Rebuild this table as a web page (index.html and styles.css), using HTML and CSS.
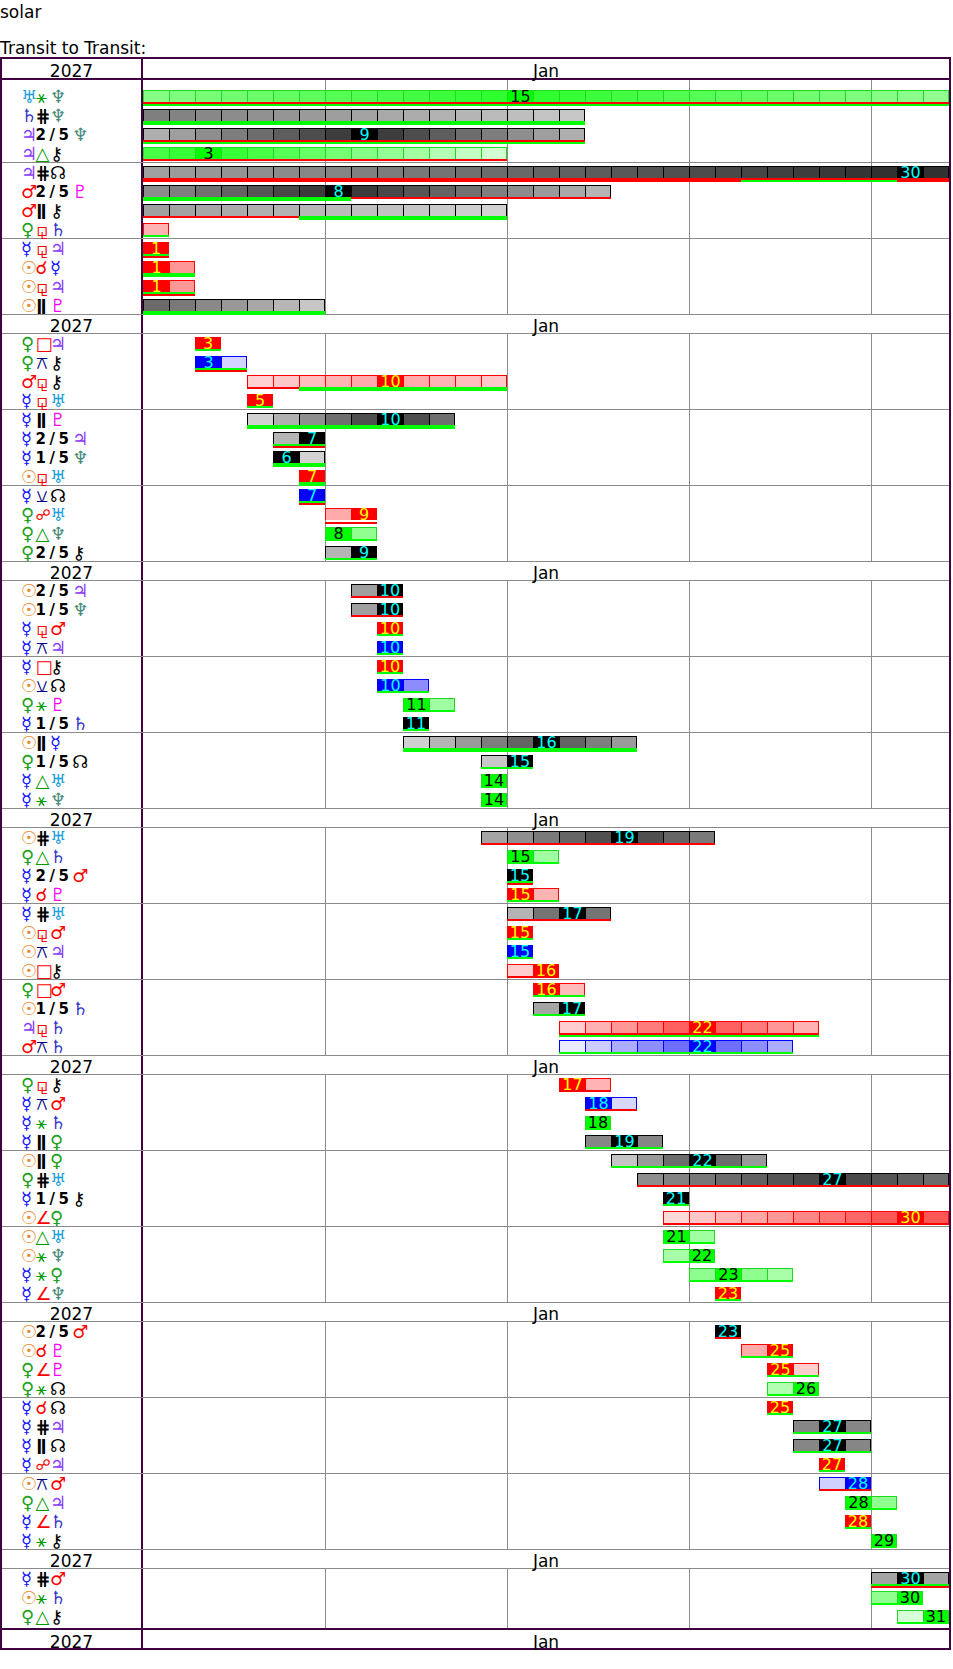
FILE: index.html
```html
<!DOCTYPE html>
<html lang="en">
<head>
<meta charset="utf-8">
<title>solar</title>
<link rel="stylesheet" href="styles.css">
</head>
<body>
<div class="intro">solar<br><br>Transit to Transit:</div>
<div class="chart">
  <div class="hdr top"><div class="yr">2027</div><div class="mon">Jan</div></div>

  <div class="grp first">
    <div class="labels">
      <div class="lbl"><span class="ur">♅</span><span class="grn">⚹</span><span class="ne">♆</span></div>
      <div class="lbl"><span class="sa">♄</span><span class="blk">⋕</span><span class="ne">♆</span></div>
      <div class="lbl"><span class="ju">♃</span><span class="q">2/5</span><span class="ne">♆</span></div>
      <div class="lbl"><span class="ju">♃</span><span class="grn">△</span><span class="ch">⚷</span></div>
    </div>
    <div class="tl">
      <div class="trk"><div class="bar" data-b="1 31 15 28 1 g" data-s="r|g"></div></div>
      <div class="trk"><div class="bar" data-b="1 17 -17 39 1 k" data-s="g|g"></div></div>
      <div class="trk"><div class="bar" data-b="1 17 9 11 1 k" data-s="r|g"></div></div>
      <div class="trk"><div class="bar" data-b="1 14 3 12 1 g" data-s="r"></div></div>
    </div>
  </div>

  <div class="grp">
    <div class="labels">
      <div class="lbl"><span class="ju">♃</span><span class="blk">⋕</span><span class="no">☊</span></div>
      <div class="lbl"><span class="ma">♂</span><span class="q">2/5</span><span class="pl">♇</span></div>
      <div class="lbl"><span class="ma">♂</span><span class="par">ǁ</span><span class="ch">⚷</span></div>
      <div class="lbl"><span class="ve">♀</span><span class="red">⚼</span><span class="sa">♄</span></div>
    </div>
    <div class="tl">
      <div class="trk"><div class="bar" data-b="1 31 30 45 1 k" data-s="r|r1-23,g24-29,r30-31"></div></div>
      <div class="trk"><div class="bar" data-b="1 18 8 13 1 k" data-s="g1-8,r9-18|g1-8"></div></div>
      <div class="trk"><div class="bar" data-b="1 14 -28 45 1 k" data-s="r1-6,g7-14|_1-6,g7-14"></div></div>
      <div class="trk"><div class="bar" data-b="1 1 0 1.5 1 r" data-s="g"></div></div>
    </div>
  </div>

  <div class="grp">
    <div class="labels">
      <div class="lbl"><span class="me">☿</span><span class="red">⚼</span><span class="ju">♃</span></div>
      <div class="lbl"><span class="su">☉</span><span class="red">☌</span><span class="me">☿</span></div>
      <div class="lbl"><span class="su">☉</span><span class="red">⚼</span><span class="ju">♃</span></div>
      <div class="lbl"><span class="su">☉</span><span class="par">ǁ</span><span class="pl">♇</span></div>
    </div>
    <div class="tl">
      <div class="trk"><div class="bar" data-b="1 1 1 1 1 r" data-s="g|r"></div></div>
      <div class="trk"><div class="bar" data-b="1 2 1 2 1 r" data-s="g|g"></div></div>
      <div class="trk"><div class="bar" data-b="1 2 1 2 1 r" data-s="g|r"></div></div>
      <div class="trk"><div class="bar" data-b="1 7 -3 11.6 1 k" data-s="g|g"></div></div>
    </div>
  </div>

  <div class="hdr"><div class="yr">2027</div><div class="mon">Jan</div></div>

  <div class="grp">
    <div class="labels">
      <div class="lbl"><span class="ve">♀</span><span class="red">□</span><span class="ju">♃</span></div>
      <div class="lbl"><span class="ve">♀</span><span class="nav">⚻</span><span class="ch">⚷</span></div>
      <div class="lbl"><span class="ma">♂</span><span class="red">⚼</span><span class="ch">⚷</span></div>
      <div class="lbl"><span class="me">☿</span><span class="red">⚼</span><span class="ur">♅</span></div>
    </div>
    <div class="tl">
      <div class="trk"><div class="bar" data-b="3 3 3 1 1 r" data-s="g"></div></div>
      <div class="trk"><div class="bar" data-b="3 4 3 1.18 1 b" data-s="g|r"></div></div>
      <div class="trk"><div class="bar" data-b="5 14 10 7.35 0.44 r" data-s="r5-6,g7-14|_5-6,g7-14"></div></div>
      <div class="trk"><div class="bar" data-b="5 5 5 1 1 r" data-s="g"></div></div>
    </div>
  </div>

  <div class="grp">
    <div class="labels">
      <div class="lbl"><span class="me">☿</span><span class="par">ǁ</span><span class="pl">♇</span></div>
      <div class="lbl"><span class="me">☿</span><span class="q">2/5</span><span class="ju">♃</span></div>
      <div class="lbl"><span class="me">☿</span><span class="q">1/5</span><span class="ne">♆</span></div>
      <div class="lbl"><span class="su">☉</span><span class="red">⚼</span><span class="ur">♅</span></div>
    </div>
    <div class="tl">
      <div class="trk"><div class="bar" data-b="5 12 10 5.4 1 k" data-s="g|g"></div></div>
      <div class="trk"><div class="bar" data-b="6 7 7 1.3 1 k" data-s="g|r"></div></div>
      <div class="trk"><div class="bar" data-b="6 7 6 1.07 1 k" data-s="g|g"></div></div>
      <div class="trk"><div class="bar" data-b="7 7 7 1 1 r" data-s="g|g"></div></div>
    </div>
  </div>

  <div class="grp">
    <div class="labels">
      <div class="lbl"><span class="me">☿</span><span class="nav">⚺</span><span class="no">☊</span></div>
      <div class="lbl"><span class="ve">♀</span><span class="red op">☍</span><span class="ur">♅</span></div>
      <div class="lbl"><span class="ve">♀</span><span class="grn">△</span><span class="ne">♆</span></div>
      <div class="lbl"><span class="ve">♀</span><span class="q">2/5</span><span class="ch">⚷</span></div>
    </div>
    <div class="tl">
      <div class="trk"><div class="bar" data-b="7 7 7 1 1 b" data-s="g|r"></div></div>
      <div class="trk"><div class="bar" data-b="8 9 9 1.6 1 r" data-s="_|r"></div></div>
      <div class="trk"><div class="bar" data-b="8 9 8 1.78 1 g" data-s="g"></div></div>
      <div class="trk"><div class="bar" data-b="8 9 9 1.3 1 k" data-s="g"></div></div>
    </div>
  </div>

  <div class="hdr"><div class="yr">2027</div><div class="mon">Jan</div></div>

  <div class="grp">
    <div class="labels">
      <div class="lbl"><span class="su">☉</span><span class="q">2/5</span><span class="ju">♃</span></div>
      <div class="lbl"><span class="su">☉</span><span class="q">1/5</span><span class="ne">♆</span></div>
      <div class="lbl"><span class="me">☿</span><span class="red">⚼</span><span class="ma">♂</span></div>
      <div class="lbl"><span class="me">☿</span><span class="nav">⚻</span><span class="ju">♃</span></div>
    </div>
    <div class="tl">
      <div class="trk"><div class="bar" data-b="9 10 10 1.55 1 k" data-s="r"></div></div>
      <div class="trk"><div class="bar" data-b="9 10 10 1.55 1 k" data-s="r"></div></div>
      <div class="trk"><div class="bar" data-b="10 10 10 1 1 r" data-s="g"></div></div>
      <div class="trk"><div class="bar" data-b="10 10 10 1 1 b" data-s="g"></div></div>
    </div>
  </div>

  <div class="grp">
    <div class="labels">
      <div class="lbl"><span class="me">☿</span><span class="red">□</span><span class="ch">⚷</span></div>
      <div class="lbl"><span class="su">☉</span><span class="nav">⚺</span><span class="no">☊</span></div>
      <div class="lbl"><span class="ve">♀</span><span class="grn">⚹</span><span class="pl">♇</span></div>
      <div class="lbl"><span class="me">☿</span><span class="q">1/5</span><span class="sa">♄</span></div>
    </div>
    <div class="tl">
      <div class="trk"><div class="bar" data-b="10 10 10 1 1 r" data-s="g"></div></div>
      <div class="trk"><div class="bar" data-b="10 11 10 2.6 1 b" data-s="g"></div></div>
      <div class="trk"><div class="bar" data-b="11 12 11 1.54 1 g" data-s="g"></div></div>
      <div class="trk"><div class="bar" data-b="11 11 11 1 1 k" data-s="g"></div></div>
    </div>
  </div>

  <div class="grp">
    <div class="labels">
      <div class="lbl"><span class="su">☉</span><span class="par">ǁ</span><span class="me">☿</span></div>
      <div class="lbl"><span class="ve">♀</span><span class="q">1/5</span><span class="no">☊</span></div>
      <div class="lbl"><span class="me">☿</span><span class="grn">△</span><span class="ur">♅</span></div>
      <div class="lbl"><span class="me">☿</span><span class="grn">⚹</span><span class="ne">♆</span></div>
    </div>
    <div class="tl">
      <div class="trk"><div class="bar" data-b="11 19 16 5.5 0.85 k" data-s="g|g"></div></div>
      <div class="trk"><div class="bar" data-b="14 15 15 1.14 1 k" data-s="g"></div></div>
      <div class="trk"><div class="bar" data-b="14 14 14 1 1 g" data-s="g"></div></div>
      <div class="trk"><div class="bar" data-b="14 14 14 1 1 g" data-s="g"></div></div>
    </div>
  </div>

  <div class="hdr"><div class="yr">2027</div><div class="mon">Jan</div></div>

  <div class="grp">
    <div class="labels">
      <div class="lbl"><span class="su">☉</span><span class="blk">⋕</span><span class="ur">♅</span></div>
      <div class="lbl"><span class="ve">♀</span><span class="grn">△</span><span class="sa">♄</span></div>
      <div class="lbl"><span class="me">☿</span><span class="q">2/5</span><span class="ma">♂</span></div>
      <div class="lbl"><span class="me">☿</span><span class="red">☌</span><span class="pl">♇</span></div>
    </div>
    <div class="tl">
      <div class="trk"><div class="bar" data-b="14 22 19 7.8 0.92 k" data-s="r"></div></div>
      <div class="trk"><div class="bar" data-b="15 16 15 1.54 1 g" data-s="g"></div></div>
      <div class="trk"><div class="bar" data-b="15 15 15 1 1 k" data-s="g|r"></div></div>
      <div class="trk"><div class="bar" data-b="15 16 15 1.47 1 r" data-s="g"></div></div>
    </div>
  </div>

  <div class="grp">
    <div class="labels">
      <div class="lbl"><span class="me">☿</span><span class="blk">⋕</span><span class="ur">♅</span></div>
      <div class="lbl"><span class="su">☉</span><span class="red">⚼</span><span class="ma">♂</span></div>
      <div class="lbl"><span class="su">☉</span><span class="nav">⚻</span><span class="ju">♃</span></div>
      <div class="lbl"><span class="su">☉</span><span class="red">□</span><span class="ch">⚷</span></div>
    </div>
    <div class="tl">
      <div class="trk"><div class="bar" data-b="15 18 17 2.67 0.96 k" data-s="r"></div></div>
      <div class="trk"><div class="bar" data-b="15 15 15 1 1 r" data-s="g"></div></div>
      <div class="trk"><div class="bar" data-b="15 15 15 1 1 b" data-s="g"></div></div>
      <div class="trk"><div class="bar" data-b="15 16 16 1.2 1 r" data-s="r"></div></div>
    </div>
  </div>

  <div class="grp">
    <div class="labels">
      <div class="lbl"><span class="ve">♀</span><span class="red">□</span><span class="ma">♂</span></div>
      <div class="lbl"><span class="su">☉</span><span class="q">1/5</span><span class="sa">♄</span></div>
      <div class="lbl"><span class="ju">♃</span><span class="red">⚼</span><span class="sa">♄</span></div>
      <div class="lbl"><span class="ma">♂</span><span class="nav">⚻</span><span class="sa">♄</span></div>
    </div>
    <div class="tl">
      <div class="trk"><div class="bar" data-b="16 17 16 1.4 1 r" data-s="g"></div></div>
      <div class="trk"><div class="bar" data-b="16 17 17 1.47 1 k" data-s="g"></div></div>
      <div class="trk"><div class="bar" data-b="17 26 22 6 1 r" data-s="r|g"></div></div>
      <div class="trk"><div class="bar" data-b="17 25 22 5 1 b" data-s="g"></div></div>
    </div>
  </div>

  <div class="hdr"><div class="yr">2027</div><div class="mon">Jan</div></div>

  <div class="grp">
    <div class="labels">
      <div class="lbl"><span class="ve">♀</span><span class="red">⚼</span><span class="ch">⚷</span></div>
      <div class="lbl"><span class="me">☿</span><span class="nav">⚻</span><span class="ma">♂</span></div>
      <div class="lbl"><span class="me">☿</span><span class="grn">⚹</span><span class="sa">♄</span></div>
      <div class="lbl"><span class="me">☿</span><span class="par">ǁ</span><span class="ve">♀</span></div>
    </div>
    <div class="tl">
      <div class="trk"><div class="bar" data-b="17 18 17 1.47 1 r" data-s="r"></div></div>
      <div class="trk"><div class="bar" data-b="18 19 18 1.15 1 b" data-s="r"></div></div>
      <div class="trk"><div class="bar" data-b="18 18 18 1 1 g" data-s="g"></div></div>
      <div class="trk"><div class="bar" data-b="18 20 19 2 1 k" data-s="g"></div></div>
    </div>
  </div>

  <div class="grp">
    <div class="labels">
      <div class="lbl"><span class="su">☉</span><span class="par">ǁ</span><span class="ve">♀</span></div>
      <div class="lbl"><span class="ve">♀</span><span class="blk">⋕</span><span class="ur">♅</span></div>
      <div class="lbl"><span class="me">☿</span><span class="q">1/5</span><span class="ch">⚷</span></div>
      <div class="lbl"><span class="su">☉</span><span class="red">∠</span><span class="ve">♀</span></div>
    </div>
    <div class="tl">
      <div class="trk"><div class="bar" data-b="19 24 22 3.57 0.89 k" data-s="g"></div></div>
      <div class="trk"><div class="bar" data-b="20 31 27 14 0.9 k" data-s="r"></div></div>
      <div class="trk"><div class="bar" data-b="21 21 21 1 1 k" data-s="g"></div></div>
      <div class="trk"><div class="bar" data-b="21 31 30 10 1 r" data-s="r"></div></div>
    </div>
  </div>

  <div class="grp">
    <div class="labels">
      <div class="lbl"><span class="su">☉</span><span class="grn">△</span><span class="ur">♅</span></div>
      <div class="lbl"><span class="su">☉</span><span class="grn">⚹</span><span class="ne">♆</span></div>
      <div class="lbl"><span class="me">☿</span><span class="grn">⚹</span><span class="ve">♀</span></div>
      <div class="lbl"><span class="me">☿</span><span class="red">∠</span><span class="ne">♆</span></div>
    </div>
    <div class="tl">
      <div class="trk"><div class="bar" data-b="21 22 21 1.54 1 g" data-s="g"></div></div>
      <div class="trk"><div class="bar" data-b="21 22 22 1.45 1 g" data-s="g"></div></div>
      <div class="trk"><div class="bar" data-b="22 25 23 4.2 0.59 g" data-s="g"></div></div>
      <div class="trk"><div class="bar" data-b="23 23 23 1 1 r" data-s="g"></div></div>
    </div>
  </div>

  <div class="hdr"><div class="yr">2027</div><div class="mon">Jan</div></div>

  <div class="grp">
    <div class="labels">
      <div class="lbl"><span class="su">☉</span><span class="q">2/5</span><span class="ma">♂</span></div>
      <div class="lbl"><span class="su">☉</span><span class="red">☌</span><span class="pl">♇</span></div>
      <div class="lbl"><span class="ve">♀</span><span class="red">∠</span><span class="pl">♇</span></div>
      <div class="lbl"><span class="ve">♀</span><span class="grn">⚹</span><span class="no">☊</span></div>
    </div>
    <div class="tl">
      <div class="trk"><div class="bar" data-b="23 23 23 1 1 k" data-s="r"></div></div>
      <div class="trk"><div class="bar" data-b="24 25 25 1.6 1 r" data-s="g"></div></div>
      <div class="trk"><div class="bar" data-b="25 26 25 1.18 1 r" data-s="g"></div></div>
      <div class="trk"><div class="bar" data-b="25 26 26 1.35 1 g" data-s="g"></div></div>
    </div>
  </div>

  <div class="grp">
    <div class="labels">
      <div class="lbl"><span class="me">☿</span><span class="red">☌</span><span class="no">☊</span></div>
      <div class="lbl"><span class="me">☿</span><span class="blk">⋕</span><span class="ju">♃</span></div>
      <div class="lbl"><span class="me">☿</span><span class="par">ǁ</span><span class="no">☊</span></div>
      <div class="lbl"><span class="me">☿</span><span class="red op">☍</span><span class="ju">♃</span></div>
    </div>
    <div class="tl">
      <div class="trk"><div class="bar" data-b="25 25 25 1 1 r" data-s="g"></div></div>
      <div class="trk"><div class="bar" data-b="26 28 27 2 1 k" data-s="g"></div></div>
      <div class="trk"><div class="bar" data-b="26 28 27 2 1 k" data-s="g"></div></div>
      <div class="trk"><div class="bar" data-b="27 27 27 1 1 r" data-s="g"></div></div>
    </div>
  </div>

  <div class="grp">
    <div class="labels">
      <div class="lbl"><span class="su">☉</span><span class="nav">⚻</span><span class="ma">♂</span></div>
      <div class="lbl"><span class="ve">♀</span><span class="grn">△</span><span class="ju">♃</span></div>
      <div class="lbl"><span class="me">☿</span><span class="red">∠</span><span class="sa">♄</span></div>
      <div class="lbl"><span class="me">☿</span><span class="grn">⚹</span><span class="ch">⚷</span></div>
    </div>
    <div class="tl">
      <div class="trk"><div class="bar" data-b="27 28 28 1.2 1 b" data-s="r"></div></div>
      <div class="trk"><div class="bar" data-b="28 29 28 1.78 1 g" data-s="g"></div></div>
      <div class="trk"><div class="bar" data-b="28 28 28 1 1 r" data-s="g"></div></div>
      <div class="trk"><div class="bar" data-b="29 29 29 1 1 g" data-s="g"></div></div>
    </div>
  </div>

  <div class="hdr"><div class="yr">2027</div><div class="mon">Jan</div></div>

  <div class="grp last">
    <div class="labels">
      <div class="lbl"><span class="me">☿</span><span class="blk">⋕</span><span class="ma">♂</span></div>
      <div class="lbl"><span class="su">☉</span><span class="grn">⚹</span><span class="sa">♄</span></div>
      <div class="lbl"><span class="ve">♀</span><span class="grn">△</span><span class="ch">⚷</span></div>
    </div>
    <div class="tl">
      <div class="trk"><div class="bar" data-b="29 31 30 1.5 1 k" data-s="g|r"></div></div>
      <div class="trk"><div class="bar" data-b="29 30 30 1.78 1 g" data-s="g"></div></div>
      <div class="trk"><div class="bar" data-b="30 31 31 1.05 1 g" data-s="g"></div></div>
    </div>
  </div>

  <div class="hdr end"><div class="yr">2027</div><div class="mon">Jan</div></div>
</div>
<script src="script.js"></script>
</body>
</html>
```

FILE: styles.css
```css
html, body {
  margin: 0;
  padding: 0;
  background: #fff;
}
body {
  font-family: "DejaVu Sans", Verdana, sans-serif;
  font-size: 17px;
  color: #000;
}
.intro {
  padding-top: 3px;
  line-height: 18px;
  height: 54px;
}
.chart {
  width: 951px;
  box-sizing: border-box;
  border: 2px solid #400040;
}
.hdr {
  display: flex;
  height: 18px;
  line-height: 22px;
  border-bottom: 1px solid #8a8a8a;
}
.hdr.top {
  height: 19px;
  line-height: 24px;
  border-bottom: 2px solid #400040;
}
.hdr.end {
  border-bottom: 0;
  border-top: 2px solid #400040;
  line-height: 24px;
}
.yr {
  width: 141px;
  flex: none;
  box-sizing: border-box;
  border-right: 2px solid #400040;
  text-align: center;
}
.mon {
  flex: 1;
  text-align: center;
}
.grp {
  display: flex;
  height: 75px;
  border-bottom: 1px solid #8a8a8a;
}
.grp.first {
  height: 82px;
}
.grp.first .labels,
.grp.first .tl {
  padding-top: 7px;
}
.grp.last {
  height: 59px;
  border-bottom: 0;
}
.labels {
  width: 141px;
  flex: none;
  box-sizing: border-box;
  border-right: 2px solid #400040;
  padding-left: 19px;
  line-height: 19px;
}
.lbl {
  height: 19px;
  white-space: nowrap;
}
.lbl span {
  display: inline-block;
  width: 14.5px;
  height: 19px;
  font-size: 18px;
  line-height: 19px;
  vertical-align: top;
  overflow: visible;
}
.lbl span:last-child {
  width: auto;
}
.lbl .op {
  font-size: 15px;
  line-height: 20px;
}
.lbl .q {
  width: auto;
  font-size: 15px;
  font-weight: bold;
  letter-spacing: 3.5px;
  line-height: 20px;
  color: #000;
}
.su { color: #e6882c; }
.me { color: #1414ff; }
.ve { color: #20a020; }
.ma { color: #ff0000; }
.ju { color: #8a3cff; }
.sa { color: #3333cc; }
.ur { color: #1e9fe0; }
.ne { color: #468a7c; }
.pl { color: #ff00ff; }
.ch { color: #000; }
.no { color: #000; }
.grn { color: #009a00; }
.red { color: #ff0000; }
.nav { color: #000080; }
.blk { color: #000; font-weight: bold; }
.lbl .par {
  color: #000;
  font-size: 15px;
  font-weight: bold;
  line-height: 20px;
  padding-left: 1px;
  box-sizing: border-box;
}

.tl {
  flex: 1;
  box-sizing: border-box;
  background-image: linear-gradient(to right,
    transparent 182px, #8c8c8c 182px, #8c8c8c 183px, transparent 183px,
    transparent 364px, #8c8c8c 364px, #8c8c8c 365px, transparent 365px,
    transparent 546px, #8c8c8c 546px, #8c8c8c 547px, transparent 547px,
    transparent 728px, #8c8c8c 728px, #8c8c8c 729px, transparent 729px);
}
.trk {
  height: 19px;
  padding-top: 3px;
  box-sizing: border-box;
}
.bar {
  height: 16px;
}
.box {
  display: flex;
  height: 12px;
  box-sizing: border-box;
  border-top: 1px solid;
  border-right: 1px solid;
}
.cell {
  flex: none;
  width: 26px;
  box-sizing: border-box;
  border-left: 1px solid;
  font-family: "DejaVu Sans", Verdana, sans-serif;
  font-size: 16px;
  line-height: 11px;
  text-align: center;
  white-space: nowrap;
  overflow: visible;
}
.cell:last-child {
  width: 25px;
}
.box.g, .box.g .cell { border-color: #22d822; }
.box.r, .box.r .cell { border-color: #ff0000; }
.box.b, .box.b .cell { border-color: #0000ff; }
.box.k, .box.k .cell { border-color: #000; }
.box.g .ex { background: #00ff00; color: #000; }
.box.r .ex { background: #ff0000; color: #ffff00; }
.box.b .ex { background: #0000ff; color: #00ffff; }
.box.k .ex { background: #000; color: #00ffff; }
.ln {
  display: flex;
  height: 2px;
}
.ln span {
  flex: none;
  width: 26px;
}
.ln .lr { background: #ff0000; }
.ln .lg { background: #00ff00; }
```

FILE: script.js
```js
(function () {
  var PAL = {
    g: [[225, 255, 225], [40, 255, 40]],
    r: [[255, 232, 232], [255, 70, 70]],
    b: [[235, 235, 255], [80, 80, 255]],
    k: [[222, 222, 222], [45, 45, 45]]
  };
  function shade(t, d, x, sp, m) {
    var k = Math.max(0, Math.min(1, 1 - Math.abs(d - x) / sp)) * m;
    var a = PAL[t][0], b = PAL[t][1];
    return 'rgb(' + a.map(function (v, i) { return Math.round(v + (b[i] - v) * k); }).join(',') + ')';
  }
  var bars = document.querySelectorAll('.bar');
  Array.prototype.forEach.call(bars, function (bar) {
    var p = bar.getAttribute('data-b').split(' ');
    var s = +p[0], e = +p[1], x = +p[2], sp = +p[3], m = +p[4], t = p[5];
    bar.style.marginLeft = (s - 1) * 26 + 'px';
    bar.style.width = (e - s + 1) * 26 + 'px';
    var box = document.createElement('div');
    box.className = 'box ' + t;
    for (var d = s; d <= e; d++) {
      var c = document.createElement('div');
      c.className = 'cell';
      if (d === x) {
        c.className += ' ex';
        c.textContent = d;
      } else {
        c.style.background = shade(t, d, x, sp, m);
      }
      box.appendChild(c);
    }
    bar.appendChild(box);
    var spec = bar.getAttribute('data-s') || '';
    spec.split('|').forEach(function (st) {
      var ln = document.createElement('div');
      ln.className = 'ln';
      var cols = [];
      for (var d = s; d <= e; d++) cols.push('');
      st.split(',').forEach(function (seg) {
        if (!seg) return;
        var col = seg.charAt(0), r = seg.slice(1), a = s, b = e;
        if (r) { var q = r.split('-'); a = +q[0]; b = +q[1]; }
        for (var d = a; d <= b; d++) cols[d - s] = col;
      });
      cols.forEach(function (col) {
        var sg = document.createElement('span');
        if (col === 'r') sg.className = 'lr';
        else if (col === 'g') sg.className = 'lg';
        ln.appendChild(sg);
      });
      bar.appendChild(ln);
    });
  });
})();
```
